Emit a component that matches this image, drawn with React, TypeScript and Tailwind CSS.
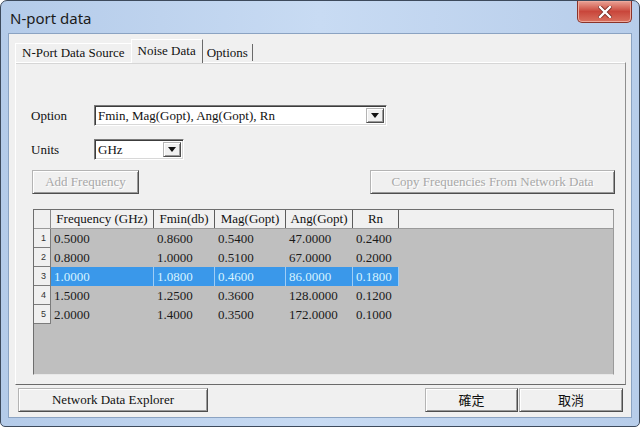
import React from "react";

const serif = "font-[family-name:'Liberation_Serif',serif]";

const raised =
  "border border-t-[#b4b4b4] border-l-[#b4b4b4] border-b-[#4e4e4e] border-r-[#4e4e4e] shadow-[inset_1px_1px_0_#ffffff,inset_-1px_-1px_0_#9a9a9a] bg-[#f0f0f0]";

const sunken =
  "border border-t-[#7a7a7a] border-l-[#7a7a7a] border-b-white border-r-white shadow-[inset_1px_1px_0_#3c3c3c,inset_-1px_-1px_0_#d8d8d8] bg-white";

const rows = [
  ["0.5000", "0.8600", "0.5400", "47.0000", "0.2400"],
  ["0.8000", "1.0000", "0.5100", "67.0000", "0.2000"],
  ["1.0000", "1.0800", "0.4600", "86.0000", "0.1800"],
  ["1.5000", "1.2500", "0.3600", "128.0000", "0.1200"],
  ["2.0000", "1.4000", "0.3500", "172.0000", "0.1000"],
];

const headers = ["Frequency (GHz)", "Fmin(db)", "Mag(Gopt)", "Ang(Gopt)", "Rn"];
const widths = ["w-[103px]", "w-[61px]", "w-[71px]", "w-[67px]", "w-[46px]"];

function DropArrow() {
  return (
    <div className={`${raised} flex h-full w-[18px] items-center justify-center`}>
      <svg width="8" height="5" viewBox="0 0 8 5">
        <path d="M0 0 H8 L4 5 Z" fill="#111" />
      </svg>
    </div>
  );
}

function Combo({ value, width }: { value: string; width: string }) {
  return (
    <div className={`${sunken} ${width} flex h-[21px] items-stretch p-[2px]`}>
      <span className="flex-1 truncate pl-[1px] text-[13px] leading-[16px] text-[#111]">{value}</span>
      <DropArrow />
    </div>
  );
}

function NoiseTable() {
  return (
    <div className="mt-[15px] ml-[17px] flex h-[166px] w-[581px] flex-col border border-t-[#6e6e6e] border-l-[#6e6e6e] border-b-[#e8e8e8] border-r-[#9a9a9a] bg-[#bfbfbf]">
      <div className="flex h-[19px] bg-[#f0f0f0] border-b border-[#9a9a9a]">
        <div className="w-[17px] border-r border-[#8a8a8a]" />
        {headers.map((h, i) => (
          <div
            key={h}
            className={`${widths[i]} border-r border-[#5c5c5c] text-center text-[13px] leading-[18px] text-[#111]`}
          >
            {h}
          </div>
        ))}
        <div className="flex-1" />
      </div>
      {rows.map((r, ri) => {
        const sel = ri === 2;
        return (
          <div key={ri} className="flex h-[19px]">
            <div className="w-[17px] border-b border-r border-[#7c7c7c] bg-[#f0f0f0] pr-[4px] text-right font-[family-name:'Liberation_Sans',sans-serif] text-[9px] leading-[18px] text-[#333]">
              {ri + 1}
            </div>
            {r.map((v, ci) => (
              <div
                key={ci}
                className={`${widths[ci]} pl-[3px] text-[13px] leading-[19px] ${
                  sel ? "bg-[#3a98ea] text-[#d6f3ff] border-r border-[#9fcdf5]" : "text-[#1a1a1a]"
                }`}
              >
                {v}
              </div>
            ))}
          </div>
        );
      })}
    </div>
  );
}

export default function App() {
  return (
    <div className={`${serif} h-[427px] w-[640px] overflow-hidden bg-white`}>
      <div className="flex h-[427px] w-[640px] flex-col rounded-t-[7px] rounded-b-[5px] border border-[#3d4a5c] bg-gradient-to-r from-[#b4cbe9] via-[#c8dbf3] to-[#b7cdea]">
        {/* title bar */}
        <div className="flex h-[32px] items-start">
          <span className="mt-[7px] ml-[9px] font-[family-name:'Noto_Sans',sans-serif] text-[15px] leading-[20px] text-[#1b1b1b]">
            N-port data
          </span>
          <div className="ml-auto mr-[7px] flex h-[22px] w-[55px] items-center justify-center rounded-b-[5px] border border-t-0 border-[#8a3329] bg-gradient-to-b from-[#e9a296] via-[#c9463b] to-[#d9705f] shadow-[inset_0_0_0_1px_#eea99c]">
            <svg width="14" height="12" viewBox="0 0 14 12">
              <path d="M2 1 L12 11 M12 1 L2 11" stroke="#7a2a22" strokeWidth="4" strokeLinecap="square" />
              <path d="M2 1 L12 11 M12 1 L2 11" stroke="#ffffff" strokeWidth="2.4" strokeLinecap="square" />
            </svg>
          </div>
        </div>

        {/* client area */}
        <div className="mx-[7px] flex h-[385px] flex-col border border-[#8ba3c2] bg-[#f0f0f0] px-[6px] pt-[6px]">
          {/* tabs */}
          <div className="flex h-[22px] items-end text-[13px] text-[#111]">
            <div className="flex h-[19px] items-center border-l border-t border-white px-[6px]">N-Port Data Source</div>
            <div className="relative z-10 -mb-px flex h-[24px] items-start border-l border-t border-r border-white border-r-[#6a6a6a] bg-[#f0f0f0] px-[6px] pt-[1px]">
              Noise Data
            </div>
            <div className="mb-[1px] flex h-[17px] items-center border-r border-[#6a6a6a] px-[4px]">Options</div>
          </div>

          {/* panel */}
          <div className="flex h-[323px] w-[611px] flex-col border border-t-white border-l-white border-b-[#6a6a6a] border-r-[#8e8e8e] shadow-[inset_0_1px_0_#d6d6d6]">
            <div className="mt-[42px] flex items-center">
              <span className="ml-[15px] w-[63px] text-[13px] text-[#111]">Option</span>
              <Combo value="Fmin, Mag(Gopt), Ang(Gopt), Rn" width="w-[293px]" />
            </div>
            <div className="mt-[13px] flex items-center">
              <span className="ml-[15px] w-[63px] text-[13px] text-[#111]">Units</span>
              <Combo value="GHz" width="w-[90px]" />
            </div>
            <div className="mt-[10px] flex">
              <button className={`${raised} ml-[16px] h-[24px] w-[107px] text-[13px] text-[#a8a8a8] [text-shadow:1px_1px_0_#ffffff]`}>
                Add Frequency
              </button>
              <button className={`${raised} ml-auto mr-[10px] h-[24px] w-[245px] text-[13px] text-[#a8a8a8] [text-shadow:1px_1px_0_#ffffff]`}>
                Copy Frequencies From Network Data
              </button>
            </div>
            <NoiseTable />
          </div>

          {/* bottom buttons */}
          <div className="mt-[3px] flex">
            <button className={`${raised} ml-[3px] h-[24px] w-[190px] text-[13px] text-[#111]`}>
              Network Data Explorer
            </button>
            <button className={`${raised} ml-auto h-[24px] w-[93px] font-[family-name:'Noto_Sans_CJK_TC',sans-serif] text-[13px] text-[#111]`}>
              確定
            </button>
            <button className={`${raised} ml-[1px] mr-[2px] h-[24px] w-[104px] font-[family-name:'Noto_Sans_CJK_TC',sans-serif] text-[13px] text-[#111]`}>
              取消
            </button>
          </div>
        </div>
      </div>
    </div>
  );
}
